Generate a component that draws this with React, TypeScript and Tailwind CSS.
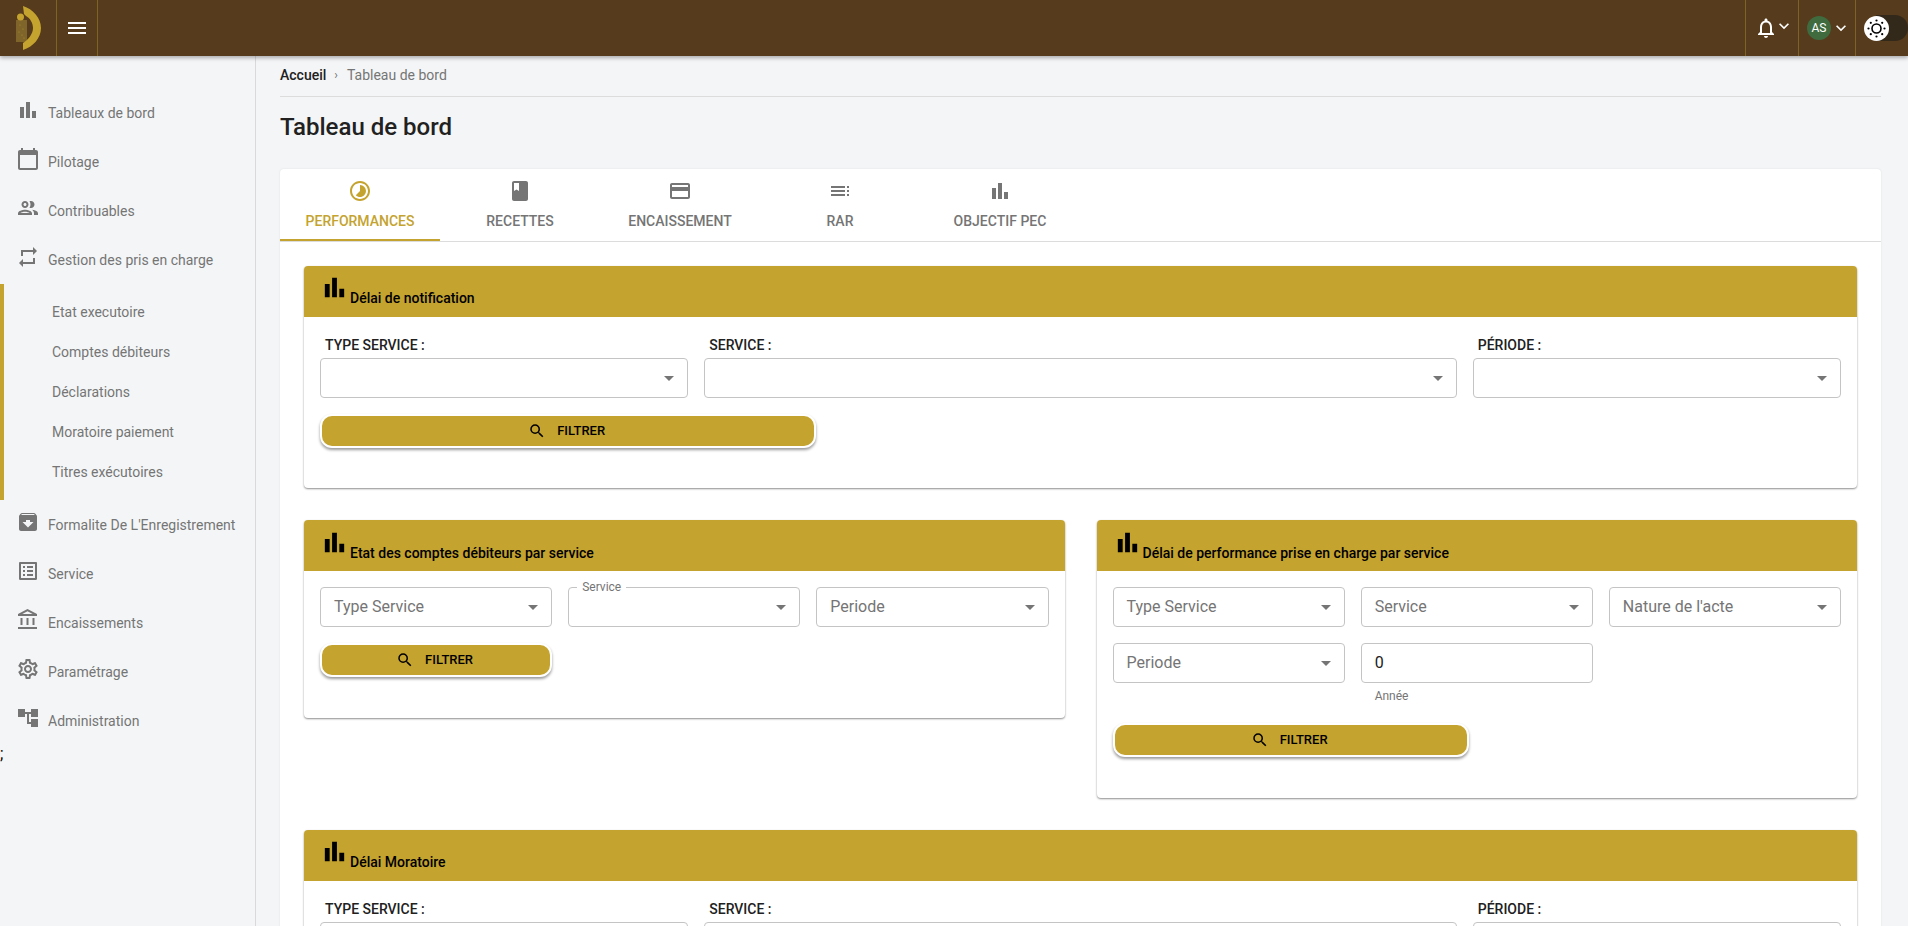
import type { ReactNode } from "react";
import {
  MdArchive,
  MdAccountTree,
  MdArrowDropDown,
  MdBarChart,
  MdBook,
  MdCalendarToday,
  MdCreditCard,
  MdKeyboardArrowDown,
  MdListAlt,
  MdMenu,
  MdNotificationsNone,
  MdOutlineAccountBalance,
  MdOutlineGroup,
  MdOutlineSettings,
  MdRepeat,
  MdSearch,
  MdTimelapse,
  MdToc,
} from "react-icons/md";

const subItems = ["Etat executoire", "Comptes débiteurs", "Déclarations", "Moratoire paiement", "Titres exécutoires"];

function SideItem({ icon, label }: { icon: ReactNode; label: string }) {
  return (
    <div className="h-[49px] flex items-center pl-4 text-sm text-[#757575]">
      <span className="w-8 shrink-0 text-2xl -mt-[5px]">{icon}</span>
      <span>{label}</span>
    </div>
  );
}

function Sidebar() {
  return (
    <aside className="w-[256px] shrink-0 border-r border-[#d9d9d9] pt-[32px]">
      <SideItem icon={<MdBarChart />} label="Tableaux de bord" />
      <SideItem icon={<MdCalendarToday />} label="Pilotage" />
      <SideItem icon={<MdOutlineGroup />} label="Contribuables" />
      <SideItem icon={<MdRepeat />} label="Gestion des pris en charge" />
      <div className="border-l-4 border-[#c4a32f] py-[8px]">
        {subItems.map((s) => (
          <div key={s} className="h-10 flex items-center pl-[48px] text-sm text-[#757575]">
            {s}
          </div>
        ))}
      </div>
      <SideItem icon={<MdArchive />} label="Formalite De L'Enregistrement" />
      <SideItem icon={<MdListAlt />} label="Service" />
      <SideItem icon={<MdOutlineAccountBalance />} label="Encaissements" />
      <SideItem icon={<MdOutlineSettings />} label="Paramétrage" />
      <SideItem icon={<MdAccountTree />} label="Administration" />
      <div className="mt-[1px] text-base leading-none text-black">;</div>
    </aside>
  );
}

function Logo() {
  return (
    <svg width="56" height="56" viewBox="0 0 56 56">
      <rect x="16" y="20" width="11" height="22" fill="#7f6529" />
      <g fill="#a88c3a">
        <circle cx="20" cy="25" r="0.6" />
        <circle cx="23" cy="29" r="0.6" />
        <circle cx="19" cy="32" r="0.6" />
        <circle cx="22" cy="35" r="0.6" />
        <circle cx="24" cy="38" r="0.6" />
      </g>
      <path d="M23 6 C33 9 41 18 41 28 C41 38 33 47 23 50 L23 43 C28 40 33 34 33 28 C33 23 30 18 26 16 L24 14 Z" fill="#c4a32f" />
      <circle cx="20.5" cy="17" r="3.5" fill="#c4a32f" />
    </svg>
  );
}

function ThemeKnob() {
  return (
    <svg width="25" height="25" viewBox="0 0 25 25" className="relative">
      <circle cx="12.5" cy="12.5" r="12.5" fill="#fff" />
      <circle cx="12.5" cy="12.5" r="4.5" fill="none" stroke="#000" strokeWidth="1.6" />
      <g fill="#000">
        <circle cx="12.5" cy="4.5" r="1.1" />
        <circle cx="12.5" cy="20.5" r="1.1" />
        <circle cx="4.5" cy="12.5" r="1.1" />
        <circle cx="20.5" cy="12.5" r="1.1" />
        <circle cx="6.8" cy="6.8" r="1.1" />
        <circle cx="18.2" cy="6.8" r="1.1" />
        <circle cx="6.8" cy="18.2" r="1.1" />
        <circle cx="18.2" cy="18.2" r="1.1" />
      </g>
    </svg>
  );
}

function TopBar() {
  return (
    <header className="h-14 bg-[#563b1c] flex items-stretch relative z-10 shadow-[0_2px_4px_rgba(0,0,0,0.3)]">
      <div className="w-[57px] border-r border-[#7d6326]">
        <Logo />
      </div>
      <div className="w-[41px] border-r border-[#7d6326] flex items-center justify-center text-white text-2xl">
        <MdMenu />
      </div>
      <div className="flex-1 border-r border-[#7d6326]" />
      <div className="w-[53px] border-r border-[#7d6326] flex items-center pl-[8px] text-white">
        <MdNotificationsNone className="text-2xl shrink-0" />
        <MdKeyboardArrowDown className="text-[20px] shrink-0 -ml-[4px] -mt-[4px]" />
      </div>
      <div className="w-[57px] border-r border-[#7d6326] flex items-center pl-[8px] text-white">
        <span className="w-6 h-6 rounded-full bg-[#3f6b3f] text-xs flex items-center justify-center shrink-0">AS</span>
        <MdKeyboardArrowDown className="text-[20px] shrink-0" />
      </div>
      <div className="w-[52px] flex items-center pl-[8px] relative">
        <span className="absolute left-[20px] right-0 top-[15px] h-[26px] rounded-r-full bg-[#33291a]" />
        <ThemeKnob />
      </div>
    </header>
  );
}

function Select({ label, floating }: { label?: string; floating?: string }) {
  return (
    <div className="h-10 relative border border-[#c4c4c4] rounded bg-white flex items-center pl-[13px] text-base text-[#757575]">
      {floating && (
        <span className="absolute -top-[8px] left-[8px] px-[5px] bg-white text-xs leading-[14px] text-[#757575]">{floating}</span>
      )}
      {label}
      <MdArrowDropDown className="absolute right-[6px] top-[7px] text-2xl text-[#757575]" />
    </div>
  );
}

function FilterButton({ className }: { className: string }) {
  return (
    <button className={`h-[34px] rounded-[12px] border-2 border-white bg-[#c4a32f] shadow-[0_2px_3px_rgba(0,0,0,0.4)] flex items-center justify-center gap-[11px] pr-[3px] text-[13px] font-medium text-black ${className}`}>
      <MdSearch className="text-lg" />
      FILTRER
    </button>
  );
}

function Section({ title, children, className, low }: { title: string; children: ReactNode; className?: string; low?: boolean }) {
  return (
    <section className={`rounded bg-white shadow-[0_1px_2px_rgba(0,0,0,0.45)] ${className ?? ""}`}>
      <div className={`h-[51px] rounded-t bg-[#c4a32f] flex pl-4 text-black ${low ? "pt-[8px]" : "pt-[7px]"}`}>
        <MdBarChart className="text-[29px] shrink-0" />
        <span className="text-sm font-medium ml-[1px] mt-[16px] leading-[18px]">{title}</span>
      </div>
      {children}
    </section>
  );
}

function LabeledFilters() {
  return (
    <div className="grid grid-cols-12 gap-x-4 px-4 pt-[18px]">
      {[
        { label: "TYPE SERVICE :", span: "col-span-3" },
        { label: "SERVICE :", span: "col-span-6" },
        { label: "PÉRIODE :", span: "col-span-3" },
      ].map((f) => (
        <div key={f.label} className={f.span}>
          <div className="pl-[5px] text-sm font-medium leading-[20px] text-[#212121] mb-[3px]">{f.label}</div>
          <Select />
        </div>
      ))}
    </div>
  );
}

export default function App() {
  const tabs = [
    { label: "PERFORMANCES", icon: <MdTimelapse />, active: true },
    { label: "RECETTES", icon: <MdBook /> },
    { label: "ENCAISSEMENT", icon: <MdCreditCard /> },
    { label: "RAR", icon: <MdToc /> },
    { label: "OBJECTIF PEC", icon: <MdBarChart /> },
  ];
  return (
    <div className="h-[926px] overflow-hidden bg-[#f4f5f7] font-['Roboto',sans-serif]">
      <TopBar />
      <div className="flex h-[870px]">
        <Sidebar />
        <main className="flex-1 min-w-0 pl-6 pr-[27px]">
          <div className="h-[41px] pb-[3px] flex items-center border-b border-[#dcdcdc] text-sm text-[#757575]">
            <span className="text-[#212121] font-medium">Accueil</span>
            <span className="ml-2 mr-[9px] text-xs">›</span>
            Tableau de bord
          </div>
          <h1 className="mt-[15px] text-[24px] leading-[30px] font-medium text-[#212121]">Tableau de bord</h1>
          <div className="mt-[27px] rounded-t bg-white shadow-[0_0_2px_rgba(0,0,0,0.1)]">
            <div className="flex h-[73px] border-b border-[#dcdcdc]">
              {tabs.map((t) => (
                <div
                  key={t.label}
                  className={`w-40 flex flex-col items-center pt-[10px] text-sm font-medium ${t.active ? "text-[#c4a32f] border-b-2 border-[#c4a32f]" : "text-[#757575]"}`}
                >
                  <span className="text-2xl">{t.icon}</span>
                  <span className="mt-[8px]">{t.label}</span>
                </div>
              ))}
            </div>
            <div className="px-6 pt-6">
              <Section title="Délai de notification">
                <LabeledFilters />
                <div className="grid grid-cols-12 gap-x-4 px-4 pt-4 pb-[40px]">
                  <FilterButton className="col-span-4" />
                </div>
              </Section>
              <div className="grid grid-cols-2 gap-x-8 mt-8 items-start">
                <Section low title="Etat des comptes débiteurs par service">
                  <div className="grid grid-cols-3 gap-x-4 px-4 pt-4">
                    <Select label="Type Service" />
                    <Select floating="Service" />
                    <Select label="Periode" />
                  </div>
                  <div className="grid grid-cols-3 gap-x-4 px-4 pt-[16px] pb-[41px]">
                    <FilterButton className="" />
                  </div>
                </Section>
                <Section low title="Délai de performance prise en charge par service">
                  <div className="grid grid-cols-3 gap-x-4 gap-y-4 px-4 pt-4">
                    <Select label="Type Service" />
                    <Select label="Service" />
                    <Select label="Nature de l'acte" />
                    <Select label="Periode" />
                    <div>
                      <div className="h-10 border border-[#c4c4c4] rounded flex items-center pl-[13px] text-base text-[#212121]">0</div>
                      <div className="pl-[14px] mt-[7px] text-xs leading-[13px] text-[#757575]">Année</div>
                    </div>
                  </div>
                  <div className="grid grid-cols-12 gap-x-4 px-4 pt-[20px] pb-[41px]">
                    <FilterButton className="col-span-6" />
                  </div>
                </Section>
              </div>
              <Section title="Délai Moratoire" className="mt-8">
                <LabeledFilters />
              </Section>
            </div>
          </div>
        </main>
      </div>
    </div>
  );
}
